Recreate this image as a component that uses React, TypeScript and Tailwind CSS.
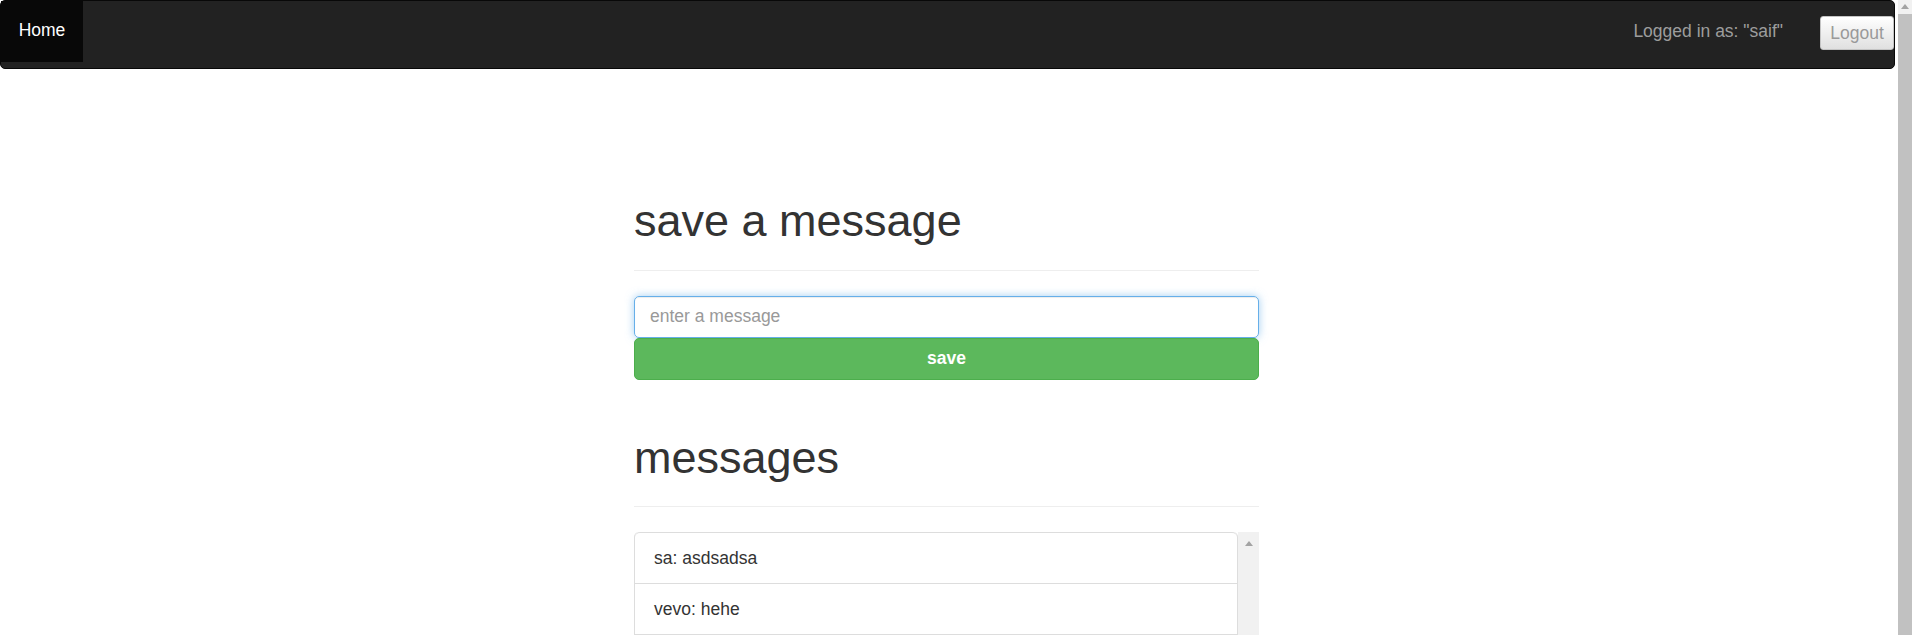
import { useState } from 'react';

const MESSAGES = [
  { user: 'sa', text: 'asdsadsa' },
  { user: 'vevo', text: 'hehe' },
];

const UpArrow = ({ className }: { className?: string }) => (
  <svg width="8" height="5" viewBox="0 0 8 5" className={className}>
    <path d="M0 5 L4 0 L8 5 Z" fill="#a3a3a3" />
  </svg>
);

const PageHeader = ({ title, className }: { title: string; className?: string }) => (
  <div className={`pb-[24px] border-b border-[#eee] ${className ?? ''}`}>
    <h1 className="text-[45px] leading-[49.5px] font-normal text-[#333]">{title}</h1>
  </div>
);

export default function App() {
  const [draft, setDraft] = useState('');

  return (
    <div className="flex h-[635px] w-[1912px] overflow-hidden bg-white font-['Liberation_Sans',Arial,sans-serif] text-[#333]">
      <div className="flex-1 min-w-0 flex flex-col">
        {/* Navbar */}
        <nav className="h-[69px] shrink-0 flex items-start justify-between bg-[#222] border border-[#080808] rounded-[5px]">
          <a href="#" className="h-[61px] w-[82px] pb-[3px] flex items-center justify-center bg-[#080808] text-white text-[17.5px] leading-[25px]">
            Home
          </a>
          <div className="flex items-start">
            <span className="mt-[18px] text-[17.5px] leading-[25px] text-[#9d9d9d]">Logged in as: "saif"</span>
            <button className="ml-[37px] mt-[15px] w-[74px] h-[34px] rounded-[3px] border border-[#c4c4c4] bg-linear-to-b from-white to-[#e0e0e0] text-[17.5px] leading-[25px] text-[#999]">
              Logout
            </button>
          </div>
        </nav>

        <main className="w-[625px] ml-[634px]">
          <PageHeader title="save a message" className="mt-[127px]" />

          <div className="mt-[25px] flex flex-col">
            <input
              value={draft}
              onChange={e => setDraft(e.target.value)}
              placeholder="enter a message"
              className="h-[42px] px-[15px] rounded-[5px] border border-[#66afe9] text-[17.5px] text-[#555] placeholder:text-[#999] outline-none shadow-[inset_0_1px_1px_rgba(0,0,0,.075),0_0_8px_rgba(102,175,233,.6)]"
            />
            <button className="h-[42px] rounded-[5px] border border-[#4cae4c] bg-[#5cb85c] text-white font-bold text-[17.5px]">
              save
            </button>
          </div>

          <PageHeader title="messages" className="mt-[53px]" />

          <div className="mt-[25px] flex h-[300px]">
            <ul className="flex-1 border-x border-[#ddd] rounded-t-[5px]">
              {MESSAGES.map((m, i) => (
                <li
                  key={i}
                  className={`py-[12.5px] px-[19px] text-[17.5px] leading-[25px] border-t border-[#ddd] ${i === 0 ? 'rounded-t-[5px]' : ''} ${i === MESSAGES.length - 1 ? 'border-b' : ''}`}
                >
                  {m.user}: {m.text}
                </li>
              ))}
            </ul>
            <div className="w-[21px] bg-[#f1f1f1] flex justify-center pt-[8px]">
              <UpArrow className="mt-[1px]" />
            </div>
          </div>
        </main>
      </div>

      {/* Page scrollbar */}
      <div className="w-[17px] shrink-0 flex pl-[3px]">
        <div className="flex-1 flex flex-col bg-[#f1f1f1]">
          <div className="h-[14px] flex justify-center items-start pt-[4px]">
            <UpArrow />
          </div>
          <div className="flex-1 bg-[#c1c1c1]" />
        </div>
      </div>
    </div>
  );
}
